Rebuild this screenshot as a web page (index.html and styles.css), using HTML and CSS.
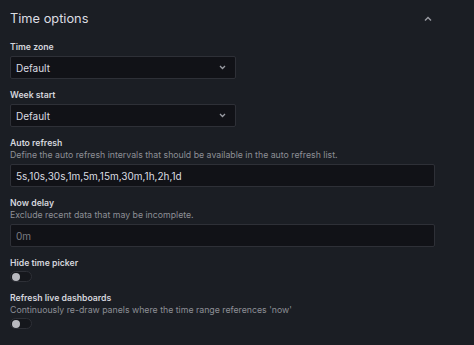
FILE: index.html
```html
<!DOCTYPE html>
<html>
<head>
<meta charset="utf-8">
<link rel="stylesheet" href="styles.css">
</head>
<body>
<div class="panel">
  <div class="header">
    <h2 class="title">Time options</h2>
    <svg class="collapse" width="8" height="6" viewBox="0 0 8 6"><path d="M1 4.5 L4 1.5 L7 4.5" fill="none" stroke="#9a9ca3" stroke-width="1.4"/></svg>
  </div>
  <div class="fields">
    <div class="field">
      <div class="label">Time zone</div>
      <div class="select short"><span>Default</span><svg width="7" height="5" viewBox="0 0 7 5"><path d="M1 1 L3.5 3.5 L6 1" fill="none" stroke="#9a9ca3" stroke-width="1.3"/></svg></div>
    </div>
    <div class="field">
      <div class="label">Week start</div>
      <div class="select short"><span>Default</span><svg width="7" height="5" viewBox="0 0 7 5"><path d="M1 1 L3.5 3.5 L6 1" fill="none" stroke="#9a9ca3" stroke-width="1.3"/></svg></div>
    </div>
    <div class="field">
      <div class="label">Auto refresh</div>
      <div class="desc">Define the auto refresh intervals that should be available in the auto refresh list.</div>
      <div class="input"><span>5s,10s,30s,1m,5m,15m,30m,1h,2h,1d</span></div>
    </div>
    <div class="field">
      <div class="label">Now delay</div>
      <div class="desc">Exclude recent data that may be incomplete.</div>
      <div class="input"><span class="placeholder">0m</span></div>
    </div>
    <div class="field">
      <div class="label">Hide time picker</div>
      <div class="toggle"><span class="knob"></span></div>
    </div>
    <div class="field">
      <div class="label">Refresh live dashboards</div>
      <div class="desc">Continuously re-draw panels where the time range references 'now'</div>
      <div class="toggle"><span class="knob"></span></div>
    </div>
  </div>
</div>
</body>
</html>
```

FILE: styles.css
```css
html, body {
  margin: 0;
  padding: 0;
  background: #1b1e24;
  font-family: Inter, "Noto Sans", sans-serif;
  color: #ccccdc;
}
.panel {
  width: 474px;
  height: 345px;
  box-sizing: border-box;
  padding: 10px 10px 0 10px;
}
.header {
  display: flex;
  align-items: center;
  justify-content: space-between;
  width: 425px;
  height: 17px;
}
.title {
  margin: 0;
  font-size: 12.8px;
  font-weight: 400;
  line-height: 17px;
  color: #dcdde2;
}
.collapse {
  margin-right: 3px;
}
.fields {
  display: flex;
  flex-direction: column;
  gap: 10px;
  margin-top: 14px;
}
.field {
  display: flex;
  flex-direction: column;
}
.label {
  font-size: 8.7px;
  font-weight: 600;
  line-height: 12px;
  color: #d4d5dc;
}
.desc {
  font-size: 8.75px;
  line-height: 12px;
  color: #8d8f96;
}
.select, .input {
  margin-top: 3px;
  height: 23px;
  box-sizing: border-box;
  background: #111217;
  border: 1px solid #2e3037;
  border-radius: 2px;
  display: flex;
  align-items: center;
  padding: 0 5px;
  font-size: 10px;
  color: #dcdde2;
}
.select {
  width: 226px;
  justify-content: space-between;
  padding-right: 9px;
}
.input {
  width: 425px;
}
.placeholder {
  color: #7a7c83;
}
.toggle {
  margin-top: 2px;
  width: 22px;
  height: 11px;
  box-sizing: border-box;
  border-radius: 6px;
  background: #15171c;
  border: 1px solid #2e3037;
  display: flex;
  align-items: center;
  padding-left: 1px;
}
.knob {
  width: 8px;
  height: 8px;
  border-radius: 50%;
  background: #b9bac0;
}
```
